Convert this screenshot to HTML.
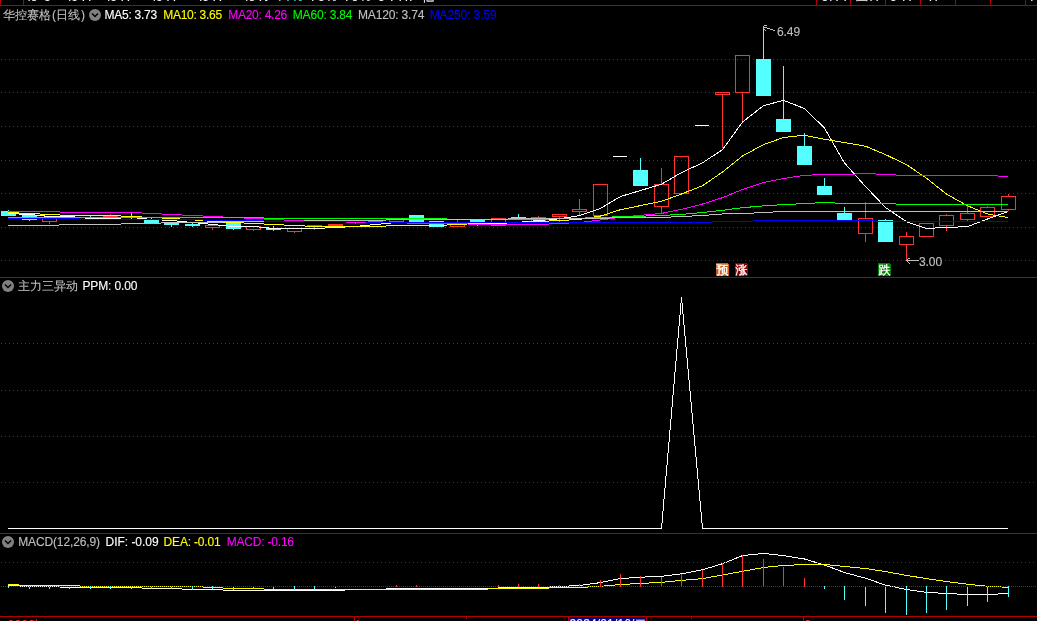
<!DOCTYPE html>
<html lang="zh-CN">
<head>
<meta charset="utf-8">
<title>华控赛格 日线</title>
<style>
html,body{margin:0;padding:0;background:#000;}
body{width:1037px;height:621px;overflow:hidden;position:relative;font-family:"Liberation Sans","WenQuanYi Zen Hei",sans-serif;}
#chart{position:absolute;left:0;top:0;width:1037px;height:621px;overflow:hidden;background:#000;}
svg{position:absolute;left:0;top:0;}
#labels{position:absolute;left:0;top:0;width:1037px;height:621px;will-change:transform;opacity:0.999;}
span{position:absolute;white-space:pre;line-height:14px;height:14px;font-size:12px;-webkit-text-stroke:0.12px currentColor;}
.a{font-family:"Liberation Sans","WenQuanYi Zen Hei",sans-serif;letter-spacing:-0.35px;}
.z{font-family:"Liberation Sans","WenQuanYi Zen Hei",sans-serif;}
.m{font-family:"Liberation Mono","WenQuanYi Zen Hei",monospace;font-size:12px;letter-spacing:-1.2px;}
.k{font-family:"Liberation Sans","WenQuanYi Zen Hei",sans-serif;font-size:12px;width:13px;text-align:center;-webkit-text-stroke:0.35px #fff;}
</style>
</head>
<body>
<div id="chart">
<svg width="1037" height="621" viewBox="0 0 1037 621" shape-rendering="crispEdges">
<rect x="0" y="5" width="1037" height="1" fill="#b00000"/>
<rect x="0" y="0" width="1" height="6" fill="#b00000"/>
<rect x="23" y="0" width="1" height="6" fill="#b00000"/>
<rect x="816" y="0" width="1" height="6" fill="#b00000"/>
<rect x="850" y="0" width="1" height="6" fill="#b00000"/>
<rect x="885" y="0" width="1" height="6" fill="#b00000"/>
<rect x="920" y="0" width="1" height="6" fill="#b00000"/>
<rect x="955" y="0" width="1" height="6" fill="#b00000"/>
<rect x="990" y="0" width="1" height="6" fill="#b00000"/>
<rect x="1025" y="0" width="1" height="6" fill="#b00000"/>
<rect x="0" y="277" width="1037" height="1" fill="#b00000"/>
<rect x="0" y="533" width="1037" height="1" fill="#b00000"/>
<rect x="0" y="616" width="1037" height="1" fill="#b00000"/>
<rect x="354" y="616" width="1" height="5" fill="#b00000"/>
<rect x="466" y="616" width="1" height="3" fill="#b00000"/>
<rect x="691" y="616" width="1" height="3" fill="#b00000"/>
<rect x="803" y="616" width="1" height="5" fill="#b00000"/>
<rect x="568" y="617" width="79" height="4" fill="#b00000"/>
<rect x="569" y="617" width="77" height="4" fill="#000080"/>
<line x1="1" y1="59.5" x2="1034" y2="59.5" stroke="#c80000" stroke-width="1" stroke-dasharray="1 3"/>
<line x1="1" y1="92.5" x2="1034" y2="92.5" stroke="#c80000" stroke-width="1" stroke-dasharray="1 3"/>
<line x1="1" y1="126.5" x2="1034" y2="126.5" stroke="#c80000" stroke-width="1" stroke-dasharray="1 3"/>
<line x1="1" y1="160.5" x2="1034" y2="160.5" stroke="#c80000" stroke-width="1" stroke-dasharray="1 3"/>
<line x1="1" y1="193.5" x2="1034" y2="193.5" stroke="#c80000" stroke-width="1" stroke-dasharray="1 3"/>
<line x1="1" y1="227.5" x2="1034" y2="227.5" stroke="#c80000" stroke-width="1" stroke-dasharray="1 3"/>
<line x1="1" y1="260.5" x2="1034" y2="260.5" stroke="#c80000" stroke-width="1" stroke-dasharray="1 3"/>
<line x1="1" y1="343.5" x2="1034" y2="343.5" stroke="#c80000" stroke-width="1" stroke-dasharray="1 3"/>
<line x1="1" y1="390.5" x2="1034" y2="390.5" stroke="#c80000" stroke-width="1" stroke-dasharray="1 3"/>
<line x1="1" y1="436.5" x2="1034" y2="436.5" stroke="#c80000" stroke-width="1" stroke-dasharray="1 3"/>
<line x1="1" y1="482.5" x2="1034" y2="482.5" stroke="#c80000" stroke-width="1" stroke-dasharray="1 3"/>
<rect x="8" y="210" width="1" height="6" fill="#54ffff"/>
<rect x="1" y="211" width="15" height="5" fill="#54ffff"/>
<rect x="29" y="215" width="1" height="6" fill="#54ffff"/>
<rect x="22" y="215" width="15" height="5" fill="#54ffff"/>
<rect x="49" y="221" width="1" height="3" fill="#ff3232"/>
<rect x="42.5" y="217.5" width="14" height="4" fill="none" stroke="#ff3232" stroke-width="1"/>
<rect x="90" y="216" width="1" height="2" fill="#54ffff"/>
<rect x="83" y="217" width="15" height="1" fill="#54ffff"/>
<rect x="110" y="214" width="1" height="3" fill="#ff3232"/>
<rect x="103" y="216" width="15" height="2" fill="#ff3232"/>
<rect x="131" y="212" width="1" height="7" fill="#54ffff"/>
<rect x="124" y="217" width="15" height="1" fill="#54ffff"/>
<rect x="151" y="218" width="1" height="5" fill="#54ffff"/>
<rect x="144" y="220" width="15" height="3" fill="#54ffff"/>
<rect x="171" y="223" width="1" height="4" fill="#54ffff"/>
<rect x="164" y="223" width="15" height="2" fill="#54ffff"/>
<rect x="192" y="223" width="1" height="4" fill="#54ffff"/>
<rect x="185" y="224" width="15" height="2" fill="#54ffff"/>
<rect x="212" y="227" width="1" height="3" fill="#ff3232"/>
<rect x="205.5" y="225.5" width="14" height="2" fill="none" stroke="#ff3232" stroke-width="1"/>
<rect x="233" y="223" width="1" height="7" fill="#54ffff"/>
<rect x="226" y="223" width="15" height="6" fill="#54ffff"/>
<rect x="253" y="229" width="1" height="2" fill="#ff3232"/>
<rect x="246.5" y="226.5" width="14" height="3" fill="none" stroke="#ff3232" stroke-width="1"/>
<rect x="273" y="226" width="1" height="5" fill="#54ffff"/>
<rect x="266" y="228" width="15" height="2" fill="#54ffff"/>
<rect x="294" y="231" width="1" height="2" fill="#ff3232"/>
<rect x="287.5" y="228.5" width="14" height="3" fill="none" stroke="#ff3232" stroke-width="1"/>
<rect x="314" y="226" width="1" height="4" fill="#ff3232"/>
<rect x="307" y="225" width="15" height="2" fill="#ff3232"/>
<rect x="328" y="224" width="15" height="2" fill="#ff3232"/>
<rect x="355" y="222" width="1" height="2" fill="#ff3232"/>
<rect x="348" y="222" width="15" height="1" fill="#ff3232"/>
<rect x="368" y="221" width="15" height="1" fill="#ff3232"/>
<rect x="389.5" y="219.5" width="14" height="2" fill="none" stroke="#ff3232" stroke-width="1"/>
<rect x="416" y="215" width="1" height="7" fill="#54ffff"/>
<rect x="409" y="215" width="15" height="7" fill="#54ffff"/>
<rect x="436" y="221" width="1" height="6" fill="#54ffff"/>
<rect x="429" y="221" width="15" height="6" fill="#54ffff"/>
<rect x="457" y="220" width="1" height="3" fill="#ff3232"/>
<rect x="450.5" y="222.5" width="14" height="4" fill="none" stroke="#ff3232" stroke-width="1"/>
<rect x="477" y="220" width="1" height="6" fill="#54ffff"/>
<rect x="470" y="220" width="15" height="2" fill="#54ffff"/>
<rect x="491.5" y="218.5" width="14" height="7" fill="none" stroke="#ff3232" stroke-width="1"/>
<rect x="518" y="214" width="1" height="5" fill="#54ffff"/>
<rect x="511" y="217" width="15" height="2" fill="#54ffff"/>
<rect x="538" y="216" width="1" height="2" fill="#ff3232"/>
<rect x="531.5" y="217.5" width="14" height="4" fill="none" stroke="#ff3232" stroke-width="1"/>
<rect x="559" y="216" width="1" height="6" fill="#ff3232"/>
<rect x="552.5" y="214.5" width="14" height="2" fill="none" stroke="#ff3232" stroke-width="1"/>
<rect x="579" y="199" width="1" height="11" fill="#ff3232"/>
<rect x="579" y="211" width="1" height="4" fill="#ff3232"/>
<rect x="572.5" y="209.5" width="14" height="2" fill="none" stroke="#ff3232" stroke-width="1"/>
<rect x="593.5" y="184.5" width="14" height="31" fill="none" stroke="#ff3232" stroke-width="1"/>
<rect x="613" y="156" width="14" height="1" fill="#ffffff"/>
<rect x="640" y="158" width="1" height="28" fill="#54ffff"/>
<rect x="633" y="170" width="15" height="16" fill="#54ffff"/>
<rect x="661" y="168" width="1" height="17" fill="#ff3232"/>
<rect x="661" y="206" width="1" height="7" fill="#ff3232"/>
<rect x="654.5" y="184.5" width="14" height="22" fill="none" stroke="#ff3232" stroke-width="1"/>
<rect x="674.5" y="156.5" width="14" height="37" fill="none" stroke="#ff3232" stroke-width="1"/>
<rect x="695" y="125" width="14" height="1" fill="#ffffff"/>
<rect x="722" y="94" width="1" height="54" fill="#ff3232"/>
<rect x="715.5" y="92.5" width="14" height="2" fill="none" stroke="#ff3232" stroke-width="1"/>
<rect x="742" y="92" width="1" height="29" fill="#ff3232"/>
<rect x="735.5" y="55.5" width="14" height="37" fill="none" stroke="#ff3232" stroke-width="1"/>
<rect x="763" y="29" width="1" height="67" fill="#54ffff"/>
<rect x="756" y="59" width="15" height="37" fill="#54ffff"/>
<rect x="783" y="66" width="1" height="66" fill="#54ffff"/>
<rect x="776" y="119" width="15" height="13" fill="#54ffff"/>
<rect x="804" y="133" width="1" height="32" fill="#54ffff"/>
<rect x="797" y="146" width="15" height="19" fill="#54ffff"/>
<rect x="824" y="178" width="1" height="17" fill="#54ffff"/>
<rect x="817" y="186" width="15" height="9" fill="#54ffff"/>
<rect x="844" y="207" width="1" height="13" fill="#54ffff"/>
<rect x="837" y="213" width="15" height="7" fill="#54ffff"/>
<rect x="865" y="202" width="1" height="17" fill="#ff3232"/>
<rect x="865" y="233" width="1" height="9" fill="#ff3232"/>
<rect x="858.5" y="218.5" width="14" height="15" fill="none" stroke="#ff3232" stroke-width="1"/>
<rect x="885" y="219" width="1" height="23" fill="#54ffff"/>
<rect x="878" y="220" width="15" height="22" fill="#54ffff"/>
<rect x="906" y="232" width="1" height="5" fill="#ff3232"/>
<rect x="906" y="244" width="1" height="17" fill="#ff3232"/>
<rect x="899.5" y="236.5" width="14" height="8" fill="none" stroke="#ff3232" stroke-width="1"/>
<rect x="919.5" y="223.5" width="14" height="13" fill="none" stroke="#ff3232" stroke-width="1"/>
<rect x="946" y="214" width="1" height="2" fill="#ff3232"/>
<rect x="946" y="225" width="1" height="6" fill="#ff3232"/>
<rect x="939.5" y="215.5" width="14" height="10" fill="none" stroke="#ff3232" stroke-width="1"/>
<rect x="967" y="206" width="1" height="8" fill="#ff3232"/>
<rect x="967" y="219" width="1" height="2" fill="#ff3232"/>
<rect x="960.5" y="213.5" width="14" height="6" fill="none" stroke="#ff3232" stroke-width="1"/>
<rect x="987" y="206" width="1" height="2" fill="#ff3232"/>
<rect x="980.5" y="207.5" width="14" height="9" fill="none" stroke="#ff3232" stroke-width="1"/>
<rect x="1008" y="194" width="1" height="3" fill="#ff3232"/>
<rect x="1008" y="209" width="1" height="2" fill="#ff3232"/>
<rect x="1001.5" y="196.5" width="14" height="13" fill="none" stroke="#ff3232" stroke-width="1"/>
<polyline points="8,213.5 29.5,214.5 49.5,216.5 69.5,216.5 90.5,218.5 110.5,218.5 131.5,217.5 151.5,219.5 171.5,220.5 192.5,222.5 212.5,224.5 233.5,226.5 253.5,226.5 273.5,228.5 294.5,228.5 314.5,228.5 335.5,227.5 355.5,226.5 375.5,224.5 396.5,222.5 416.5,222.4 436.5,222.6 457.5,223.4 477.5,223.8 498.5,223.5 518.5,222.3 538.5,220.5 559.5,218.8 579.5,215.6 600.5,208.4 620.5,196.5 640.5,190.5 661.5,184.2 681.5,172.6 702.5,162.8 722.5,149.7 742.5,122 763.5,105.7 783.5,100.3 804.5,108.6 824.5,128 844.5,163 865.5,186.5 885.5,207.5 906.5,221.7 926.5,228.4 946.5,227.5 967.5,226.6 987.5,219 1008,211.5" fill="none" stroke="#ffffff" stroke-width="1"/>
<polyline points="8,212.5 29.5,213.5 49.5,214.5 69.5,215.5 90.5,215.5 110.5,215.5 131.5,216.5 151.5,217.5 171.5,218.5 192.5,219.8 212.5,221.5 233.5,222.5 253.5,223.5 273.5,224.5 294.5,225.5 314.5,226.5 335.5,226.5 355.5,226.5 375.5,226.5 396.5,225.5 416.5,225.5 436.5,225.5 457.5,224.5 477.5,223.5 498.5,222.5 518.5,222.5 538.5,221.5 559.5,220.5 579.5,219.5 600.5,216 620.5,209.7 640.5,205.6 661.5,201.3 681.5,194 702.5,185.8 722.5,172 742.5,156 763.5,144.6 783.5,137.5 804.5,135.2 824.5,139.3 844.5,142.5 865.5,146.2 885.5,154.6 906.5,164.7 926.5,178.2 946.5,194.1 967.5,205.8 987.5,214 1008,217.5" fill="none" stroke="#ffff00" stroke-width="1"/>
<polyline points="8,211.5 29.5,211.5 49.5,211.5 69.5,212.5 90.5,212.5 110.5,212.5 131.5,212.5 151.5,213.5 171.5,214.5 192.5,215.5 212.5,216.5 233.5,217.5 253.5,218.5 273.5,219.5 294.5,220.5 314.5,221.5 335.5,221.5 355.5,222.5 375.5,222.5 396.5,222.5 416.5,223.5 436.5,223.5 457.5,223.5 477.5,224.5 498.5,224.5 518.5,224.5 538.5,224.5 559.5,223.5 579.5,222.5 600.5,220 620.5,217.2 640.5,215.3 661.5,213.4 681.5,209.4 702.5,204 722.5,197.7 742.5,189.5 763.5,182.6 783.5,178.5 804.5,175.3 824.5,174.5 844.5,174.5 865.5,173.5 885.5,174.5 906.5,175.5 926.5,175.5 946.5,175.5 967.5,175.5 987.5,175.5 1008,176.5" fill="none" stroke="#ff00ff" stroke-width="1"/>
<polyline points="8,217.5 29.5,217.5 49.5,217.5 69.5,217.5 90.5,217.5 110.5,217.5 131.5,217.5 151.5,217.5 171.5,217.5 192.5,217.5 212.5,217.5 233.5,217.5 253.5,217.5 273.5,218.5 294.5,218.5 314.5,218.5 335.5,218.5 355.5,218.5 375.5,218.5 396.5,218.5 416.5,218.5 436.5,218.5 457.5,219.5 477.5,219.5 498.5,219.5 518.5,219.5 538.5,219.5 559.5,218.5 579.5,218.2 600.5,217.5 620.5,216.6 640.5,216.2 661.5,215.5 681.5,214.4 702.5,212.5 722.5,210.3 742.5,207.7 763.5,205.9 783.5,204.6 804.5,203.6 824.5,202.5 844.5,203.5 865.5,203.5 885.5,203.5 906.5,204.5 926.5,204.5 946.5,204.5 967.5,204.5 987.5,204.5 1008,204.5" fill="none" stroke="#00ff00" stroke-width="1"/>
<polyline points="8,225.5 29.5,225.5 49.5,225.5 69.5,224.5 90.5,224.5 110.5,224.5 131.5,223.5 151.5,223.5 171.5,222.5 192.5,222.5 212.5,222.5 233.5,221.5 253.5,221.5 273.5,221.5 294.5,221.5 314.5,220.5 335.5,220.5 355.5,220.5 375.5,220.5 396.5,219.5 416.5,219.5 436.5,219.5 457.5,219.5 477.5,219.5 498.5,219.5 518.5,218.5 538.5,218.5 559.5,218.5 579.5,218.5 600.5,218.5 620.5,217.5 640.5,217.5 661.5,217.5 681.5,216.5 702.5,215.5 722.5,214.0 742.5,213.6 763.5,212.5 783.5,211.5 804.5,211.5 824.5,211.5 844.5,211.5 865.5,211.5 885.5,211.5 906.5,211.5 926.5,211.5 946.5,211.5 967.5,211.5 987.5,211.5 1008,211.5" fill="none" stroke="#c0c0c0" stroke-width="1"/>
<polyline points="8,218.5 29.5,218.5 49.5,218.5 69.5,218.5 90.5,219.5 110.5,219.5 131.5,219.5 151.5,219.5 171.5,219.5 192.5,219.5 212.5,220.5 233.5,220.5 253.5,220.5 273.5,221.5 294.5,221.5 314.5,221.5 335.5,221.5 355.5,221.5 375.5,222.5 396.5,222.5 416.5,222.5 436.5,222.5 457.5,222.5 477.5,222.5 498.5,222.5 518.5,222.5 538.5,222.5 559.5,222.5 579.5,222.5 600.5,222.5 620.5,222.5 640.5,222.5 661.5,222.5 681.5,222.5 702.5,222.5 722.5,221.5 742.5,221.5 763.5,220.5 783.5,220.5 804.5,220.5 824.5,220.5 844.5,220.5 865.5,220.5 885.5,221.5 906.5,221.5 926.5,221.5 946.5,221.5 967.5,221.5 987.5,221.5 1008,221.5" fill="none" stroke="#0000ff" stroke-width="1"/>
<rect x="764" y="25" width="3" height="1" fill="#c0c0c0"/>
<rect x="763" y="26" width="1" height="1" fill="#c0c0c0"/>
<rect x="763" y="27" width="4" height="1" fill="#c0c0c0"/>
<rect x="763" y="28" width="1" height="1" fill="#c0c0c0"/>
<rect x="767" y="28" width="3" height="1" fill="#c0c0c0"/>
<rect x="764" y="29" width="1" height="1" fill="#c0c0c0"/>
<rect x="770" y="29" width="3" height="1" fill="#c0c0c0"/>
<rect x="765" y="30" width="1" height="1" fill="#c0c0c0"/>
<rect x="773" y="30" width="2" height="1" fill="#c0c0c0"/>
<rect x="906" y="260" width="13" height="1" fill="#c0c0c0"/>
<rect x="907" y="259" width="1" height="1" fill="#c0c0c0"/>
<rect x="908" y="258" width="2" height="1" fill="#c0c0c0"/>
<rect x="907" y="261" width="1" height="1" fill="#c0c0c0"/>
<rect x="908" y="262" width="1" height="1" fill="#c0c0c0"/>
<rect x="909" y="263" width="1" height="1" fill="#c0c0c0"/>
<path d="M716 263H727L729 265V276H716Z" fill="#cc5a14"/>
<path d="M735 263H746L748 265V276H735Z" fill="#8b0000"/>
<path d="M878 263H889L891 265V276H878Z" fill="#008000"/>
<polyline points="8,528.5 661.5,528.5 681.5,297.5 702.5,528.5 1008,528.5" fill="none" stroke="#ffffff"/>
<polyline points="8,585.5 29.5,586.5 49.5,586.5 69.5,587.5 90.5,587.5 110.5,587.5 131.5,587.5 151.5,588.5 171.5,588.5 192.5,589.5 212.5,589.5 233.5,590.5 253.5,590.5 273.5,590.5 294.5,590.5 314.5,590.5 335.5,590.5 355.5,589.5 375.5,589.5 396.5,588.5 416.5,588.5 436.5,588.5 457.5,588.5 477.5,588.5 498.5,588.0 518.5,587.5 538.5,587.5 559.5,586.5 579.5,585.5 600.5,582.6 620.5,578.6 640.5,577.2 661.5,576.3 681.5,573.8 702.5,569.8 722.5,563.7 742.5,555.6 763.5,553.4 783.5,555.6 804.5,559 824.5,565 844.5,572.5 865.5,578.2 885.5,585.1 906.5,589.5 926.5,592.4 946.5,593.5 967.5,594.5 987.5,594.5 1008,593.5" fill="none" stroke="#ffffff" stroke-width="1"/>
<polyline points="8,584.5 29.5,585.5 49.5,585.5 69.5,585.5 90.5,586.5 110.5,586.5 131.5,586.5 151.5,586.5 171.5,586.5 192.5,586.5 212.5,587.5 233.5,588.5 253.5,588.5 273.5,589.5 294.5,589.5 314.5,589.5 335.5,589.5 355.5,589.5 375.5,589.5 396.5,589.5 416.5,589.5 436.5,589.5 457.5,589.5 477.5,589.5 498.5,588.5 518.5,588.5 538.5,588.5 559.5,587.5 579.5,587.5 600.5,586.3 620.5,584.5 640.5,583.5 661.5,582.3 681.5,580.4 702.5,578.6 722.5,575 742.5,571.3 763.5,567.5 783.5,565.4 804.5,564.6 824.5,564.5 844.5,566.5 865.5,568.5 885.5,571.6 906.5,575.4 926.5,578.6 946.5,581.5 967.5,584.2 987.5,586.3 1008,587.3" fill="none" stroke="#ffff00" stroke-width="1"/>
<rect x="396" y="585" width="1" height="2" fill="#ff3232"/>
<rect x="416" y="585" width="1" height="2" fill="#ff3232"/>
<rect x="498" y="585" width="1" height="2" fill="#ff3232"/>
<rect x="518" y="584" width="1" height="3" fill="#ff3232"/>
<rect x="538" y="584" width="1" height="3" fill="#ff3232"/>
<rect x="559" y="585" width="1" height="2" fill="#ff3232"/>
<rect x="579" y="584" width="1" height="3" fill="#ff3232"/>
<rect x="600" y="580" width="1" height="7" fill="#ff3232"/>
<rect x="620" y="574" width="1" height="13" fill="#ff3232"/>
<rect x="640" y="576" width="1" height="11" fill="#ff3232"/>
<rect x="661" y="577" width="1" height="10" fill="#ff3232"/>
<rect x="681" y="574" width="1" height="13" fill="#ff3232"/>
<rect x="702" y="570" width="1" height="17" fill="#ff3232"/>
<rect x="722" y="563" width="1" height="24" fill="#ff3232"/>
<rect x="742" y="555" width="1" height="32" fill="#ff3232"/>
<rect x="763" y="559" width="1" height="28" fill="#ff3232"/>
<rect x="783" y="567" width="1" height="20" fill="#ff3232"/>
<rect x="804" y="578" width="1" height="9" fill="#ff3232"/>
<rect x="8" y="586" width="1" height="2" fill="#54ffff"/>
<rect x="29" y="586" width="1" height="3" fill="#54ffff"/>
<rect x="49" y="586" width="1" height="3" fill="#54ffff"/>
<rect x="69" y="586" width="1" height="3" fill="#54ffff"/>
<rect x="90" y="586" width="1" height="3" fill="#54ffff"/>
<rect x="110" y="586" width="1" height="3" fill="#54ffff"/>
<rect x="131" y="586" width="1" height="3" fill="#54ffff"/>
<rect x="151" y="586" width="1" height="3" fill="#54ffff"/>
<rect x="171" y="586" width="1" height="3" fill="#54ffff"/>
<rect x="192" y="586" width="1" height="4" fill="#54ffff"/>
<rect x="212" y="586" width="1" height="3" fill="#54ffff"/>
<rect x="233" y="586" width="1" height="4" fill="#54ffff"/>
<rect x="253" y="586" width="1" height="3" fill="#54ffff"/>
<rect x="273" y="586" width="1" height="3" fill="#54ffff"/>
<rect x="294" y="586" width="1" height="4" fill="#54ffff"/>
<rect x="314" y="586" width="1" height="3" fill="#54ffff"/>
<rect x="335" y="586" width="1" height="2" fill="#54ffff"/>
<rect x="824" y="586" width="1" height="3" fill="#54ffff"/>
<rect x="844" y="586" width="1" height="14" fill="#54ffff"/>
<rect x="865" y="586" width="1" height="20" fill="#54ffff"/>
<rect x="885" y="586" width="1" height="27" fill="#54ffff"/>
<rect x="906" y="586" width="1" height="29" fill="#54ffff"/>
<rect x="926" y="586" width="1" height="27" fill="#54ffff"/>
<rect x="946" y="586" width="1" height="24" fill="#54ffff"/>
<rect x="967" y="586" width="1" height="20" fill="#54ffff"/>
<rect x="987" y="586" width="1" height="16" fill="#54ffff"/>
<rect x="1008" y="586" width="1" height="11" fill="#54ffff"/>
<line x1="1" y1="562.5" x2="1034" y2="562.5" stroke="#c80000" stroke-width="1" stroke-dasharray="1 3"/>
<line x1="1" y1="586.5" x2="1036" y2="586.5" stroke="#c80000" stroke-width="1" stroke-dasharray="1 1"/>
<g shape-rendering="geometricPrecision"><circle cx="95" cy="15" r="6" fill="#808080"/><polyline points="92,13.5 95,16.5 98,13.5" fill="none" stroke="#000" stroke-width="1.5"/></g><g shape-rendering="geometricPrecision"><circle cx="8" cy="286" r="6" fill="#808080"/><polyline points="5,284.5 8,287.5 11,284.5" fill="none" stroke="#000" stroke-width="1.5"/></g><g shape-rendering="geometricPrecision"><circle cx="8" cy="542" r="6" fill="#808080"/><polyline points="5,540.5 8,543.5 11,540.5" fill="none" stroke="#000" stroke-width="1.5"/></g>
</svg>
<div id="labels">
<span class="z" style="left:3px;top:8px;color:#c0c0c0;">华控赛格</span><span class="z" style="left:52px;top:8px;color:#c0c0c0;">(</span><span class="z" style="left:56px;top:8px;color:#c0c0c0;">日线</span><span class="z" style="left:81px;top:8px;color:#c0c0c0;">)</span><span class="a" style="left:104.5px;top:8px;color:#ffffff;letter-spacing:-0.26px;">MA5: 3.73</span><span class="a" style="left:163.2px;top:8px;color:#ffff00;letter-spacing:-0.27px;">MA10: 3.65</span><span class="a" style="left:228.2px;top:8px;color:#ff00ff;letter-spacing:-0.26px;">MA20: 4.26</span><span class="a" style="left:292.8px;top:8px;color:#00ff00;letter-spacing:-0.19px;">MA60: 3.84</span><span class="a" style="left:358px;top:8px;color:#c0c0c0;letter-spacing:-0.16px;">MA120: 3.74</span><span class="a" style="left:429.7px;top:8px;color:#0000ff;letter-spacing:-0.11px;">MA250: 3.59</span><span class="z" style="left:18px;top:279px;color:#c0c0c0;">主力三异动</span><span class="a" style="left:82.5px;top:279px;color:#ffffff;letter-spacing:-0.14px;">PPM: 0.00</span><span class="a" style="left:18.2px;top:535px;color:#c0c0c0;letter-spacing:-0.13px;">MACD(12,26,9)</span><span class="a" style="left:105.6px;top:535px;color:#ffffff;letter-spacing:-0.04px;">DIF: -0.09</span><span class="a" style="left:163.6px;top:535px;color:#ffff00;letter-spacing:-0.18px;">DEA: -0.01</span><span class="a" style="left:226.7px;top:535px;color:#ff00ff;letter-spacing:-0.2px;">MACD: -0.16</span><span class="a" style="left:777px;top:25px;color:#c0c0c0;letter-spacing:-0.1px;">6.49</span><span class="a" style="left:919px;top:255px;color:#c0c0c0;letter-spacing:-0.1px;">3.00</span><span class="k" style="left:716px;top:263px;color:#ffffff;">预</span><span class="k" style="left:735px;top:263px;color:#ffffff;">涨</span><span class="k" style="left:878px;top:263px;color:#ffffff;">跌</span><span class="z" style="left:7.5px;top:618px;color:#ff3232;letter-spacing:0.3px;">2023</span><span class="z" style="left:33px;top:618px;color:#ff3232;">年</span><span class="a" style="left:354.5px;top:618px;color:#ff3232;">1</span><span class="a" style="left:804.5px;top:618px;color:#ff3232;">2</span><span class="z" style="left:569.5px;top:616.6px;color:#ffffff;letter-spacing:0.15px;">2024/01/16/二</span><span class="a" style="left:24.5px;top:-10px;color:#ffffff;">40</span><span class="a" style="left:44px;top:-10px;color:#ffffff;">0</span><span class="a" style="left:65px;top:-10px;color:#ffffff;">40 77</span><span class="a" style="left:103.9px;top:-10px;color:#ffffff;">40 77</span><span class="a" style="left:149.7px;top:-10px;color:#ffffff;">40 77</span><span class="a" style="left:195.9px;top:-10px;color:#ffffff;">40 77</span><span class="a" style="left:242.1px;top:-10px;color:#ffffff;">40 77</span><span class="a" style="left:263px;top:-10px;color:#ffffff;">7</span><span class="a" style="left:277px;top:-10px;color:#54ffff;">7</span><span class="a" style="left:285.3px;top:-10px;color:#54ffff;">7</span><span class="a" style="left:292px;top:-10px;color:#54ffff;">%</span><span class="a" style="left:310px;top:-10px;color:#ffffff;">7</span><span class="a" style="left:318px;top:-10px;color:#ffffff;">0</span><span class="a" style="left:326px;top:-10px;color:#ffffff;">%</span><span class="a" style="left:344px;top:-10px;color:#ffffff;">7</span><span class="a" style="left:351.5px;top:-10px;color:#ffffff;">0</span><span class="a" style="left:360px;top:-10px;color:#ffffff;">%</span><span class="a" style="left:378px;top:-10px;color:#ffffff;">0</span><span class="a" style="left:389px;top:-10px;color:#ffffff;">7</span><span class="a" style="left:397.5px;top:-10px;color:#ffffff;">77</span><span class="a" style="left:408px;top:-10px;color:#ffffff;">7</span><span class="a" style="left:422px;top:-10px;color:#ffffff;">亿</span><span class="a" style="left:821.5px;top:-10px;color:#ffffff;">0</span><span class="a" style="left:828px;top:-10px;color:#ffffff;">77</span><span class="a" style="left:842.5px;top:-10px;color:#ffffff;">7</span><span class="a" style="left:856px;top:-10px;color:#ffffff;">二</span><span class="a" style="left:868.3px;top:-10px;color:#ffffff;">77</span><span class="a" style="left:890px;top:-10px;color:#ffffff;">0</span><span class="a" style="left:901px;top:-10px;color:#ffffff;">77</span><span class="a" style="left:927.8px;top:-10px;color:#ffffff;">7</span><span class="a" style="left:933.5px;top:-10px;color:#ffffff;">7</span><span class="a" style="left:1029px;top:-10px;color:#ffffff;">7</span>
</div>
</div>
</body>
</html>
